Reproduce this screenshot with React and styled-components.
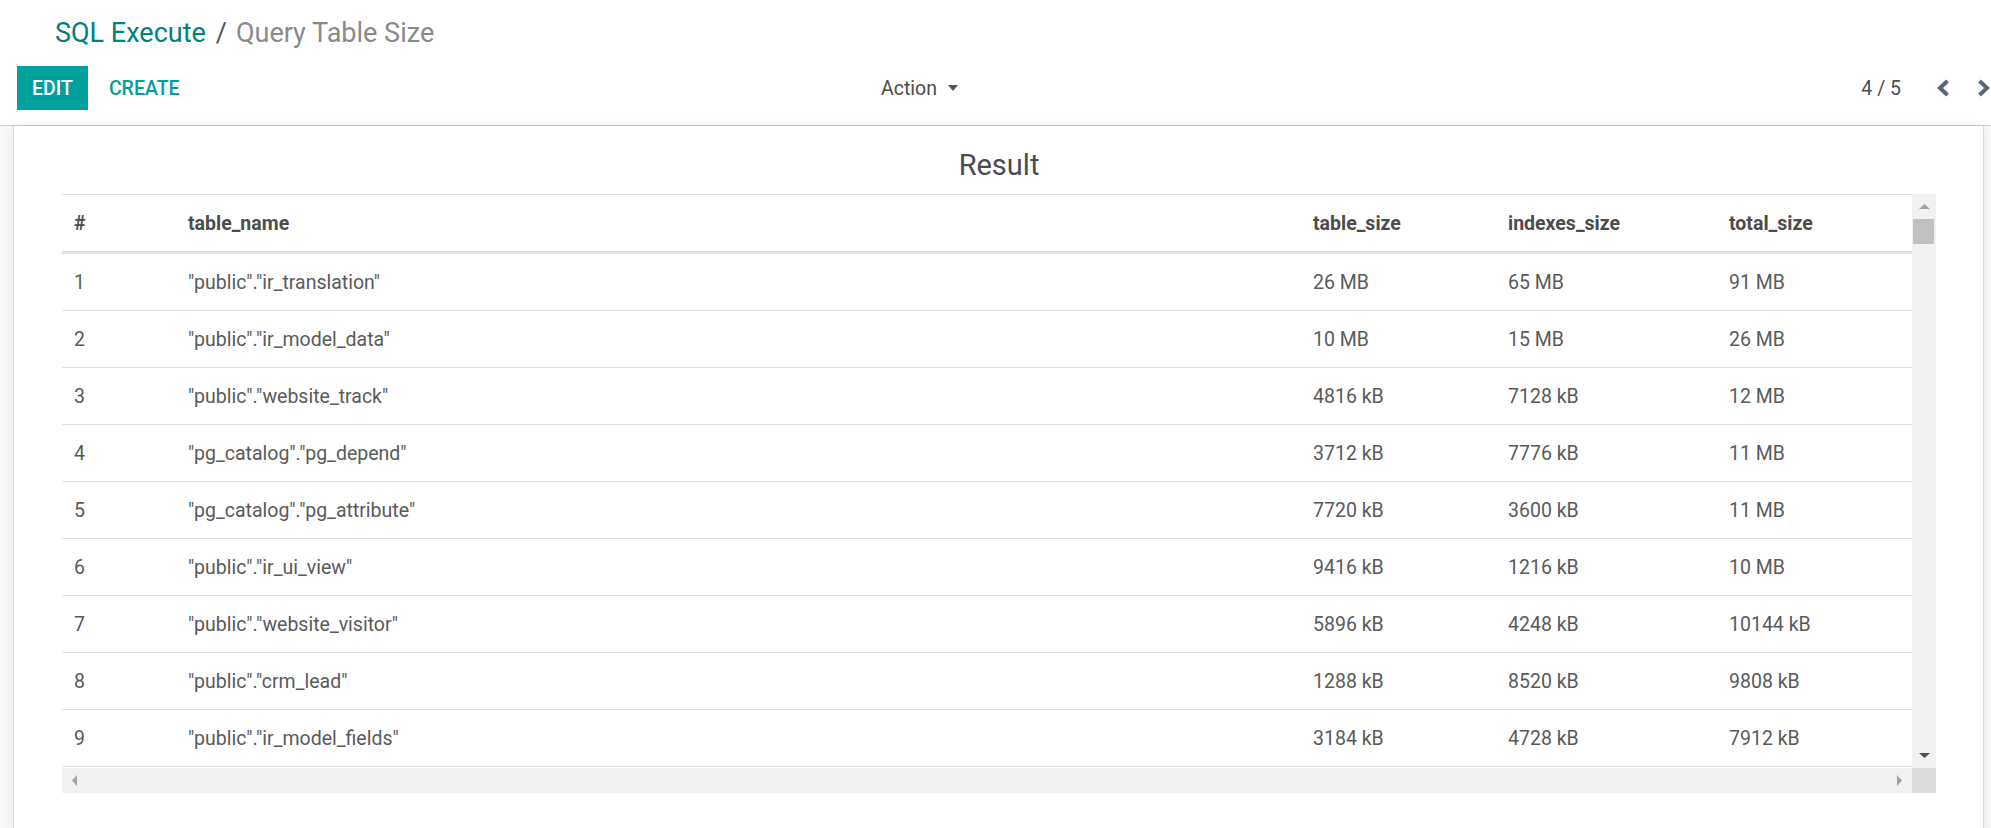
import React from 'react';
import styled, { createGlobalStyle } from 'styled-components';

const GlobalStyle = createGlobalStyle`
  html, body {
    margin: 0;
    padding: 0;
    background: #f9f9f9;
    font-family: Roboto, "Liberation Sans", Arial, sans-serif;
    color: #4c4c4c;
  }
  * {
    box-sizing: border-box;
  }
`;

const ControlPanel = styled.div`
  background: #fff;
  border-bottom: 1px solid #cfcfcf;
  padding: 15px 0 15px 17px;
`;

const Breadcrumb = styled.div`
  display: flex;
  align-items: center;
  padding-left: 38px;
  height: 36px;
  font-size: 27px;
  line-height: 36px;
  white-space: nowrap;
`;

const CrumbLink = styled.span`
  color: #01807c;
`;

const CrumbSep = styled.span`
  color: #555;
  margin: 0 9px 0 10px;
`;

const CrumbActive = styled.span`
  color: #8a8a8a;
`;

const BottomRow = styled.div`
  display: flex;
  align-items: center;
  margin-top: 15px;
  height: 44px;
`;

const LeftGroup = styled.div`
  flex: 0 0 calc(50% - 8px);
  display: flex;
  align-items: center;
`;

const Button = styled.button`
  height: 44px;
  padding: 0 15px;
  border: none;
  font-family: inherit;
  font-size: 19.5px;
  font-weight: 500;
  text-transform: uppercase;
  cursor: pointer;
  background: ${(p) => (p.primary ? '#00a09d' : 'transparent')};
  color: ${(p) => (p.primary ? '#fff' : '#00a09d')};
  margin-left: ${(p) => (p.primary ? '0' : '6px')};
`;

const ActionMenu = styled.div`
  margin-left: auto;
  margin-right: 38px;
  display: flex;
  align-items: center;
  font-size: 19.5px;
  color: #4c4c4c;
`;

const Caret = styled.span`
  display: inline-block;
  margin-left: 11px;
  border-top: 6px solid #555;
  border-left: 5px solid transparent;
  border-right: 5px solid transparent;
`;

const RightGroup = styled.div`
  flex: 1;
  display: flex;
  justify-content: flex-end;
  align-items: center;
`;

const PagerValue = styled.span`
  font-size: 19.5px;
  color: #4c4c4c;
  margin-right: 35px;
  white-space: nowrap;
`;

const PagerButton = styled.span`
  display: inline-flex;
  width: 15px;
  height: 18px;
  margin-left: ${(p) => p.gap || 0}px;
`;

const Main = styled.div`
  padding: 0 7px 0 13px;
`;

const Sheet = styled.div`
  background: #fff;
  border-left: 1px solid #dcdcdc;
  border-right: 1px solid #dcdcdc;
  box-shadow: 0 0 10px rgba(0, 0, 0, 0.08);
  min-height: calc(100vh - 126px);
  padding: 22px 47px 40px 48px;
`;

const Title = styled.div`
  text-align: center;
  font-size: 29px;
  line-height: 34px;
  color: #4c4c4c;
  margin-bottom: 12px;
`;

const ScrollFrame = styled.div`
  display: grid;
  grid-template-columns: 1fr 24px;
  grid-template-rows: 574px 25px;
`;

const Viewport = styled.div`
  overflow: hidden;
`;

const columns = '114px 1125px 195px 221px 195px';

const HeaderRow = styled.div`
  display: grid;
  grid-template-columns: ${columns};
  height: 60px;
  border-top: 1px solid #dee2e6;
  border-bottom: 3px solid #dee2e6;
`;

const Row = styled.div`
  display: grid;
  grid-template-columns: ${columns};
  height: 57px;
  border-bottom: 1px solid #dee2e6;
`;

const HeadCell = styled.div`
  display: flex;
  align-items: center;
  padding: 0 12px;
  font-size: 19.5px;
  font-weight: 700;
  color: #4c4c4c;
  white-space: nowrap;
`;

const Cell = styled.div`
  display: flex;
  align-items: center;
  padding: 0 12px;
  font-size: 19.5px;
  color: #5a5a5a;
  white-space: nowrap;
`;

const VScroll = styled.div`
  display: flex;
  flex-direction: column;
  background: #f1f1f1;
`;

const HScroll = styled.div`
  display: flex;
  background: #f1f1f1;
`;

const ArrowBox = styled.div`
  flex: 0 0 25px;
  height: 25px;
  width: ${(p) => (p.wide ? '25px' : '24px')};
  display: flex;
  align-items: center;
  justify-content: center;
`;

const Thumb = styled.div`
  height: 25px;
  margin: 0 2px 0 1px;
  background: #c1c1c1;
`;

const Spacer = styled.div`
  flex: 1;
`;

const Corner = styled.div`
  background: #dcdcdc;
`;

const rows = [
  ['1', '"public"."ir_translation"', '26 MB', '65 MB', '91 MB'],
  ['2', '"public"."ir_model_data"', '10 MB', '15 MB', '26 MB'],
  ['3', '"public"."website_track"', '4816 kB', '7128 kB', '12 MB'],
  ['4', '"pg_catalog"."pg_depend"', '3712 kB', '7776 kB', '11 MB'],
  ['5', '"pg_catalog"."pg_attribute"', '7720 kB', '3600 kB', '11 MB'],
  ['6', '"public"."ir_ui_view"', '9416 kB', '1216 kB', '10 MB'],
  ['7', '"public"."website_visitor"', '5896 kB', '4248 kB', '10144 kB'],
  ['8', '"public"."crm_lead"', '1288 kB', '8520 kB', '9808 kB'],
  ['9', '"public"."ir_model_fields"', '3184 kB', '4728 kB', '7912 kB'],
];

const Chevron = ({ dir }) => (
  <svg width="15" height="18" viewBox="0 0 15 18">
    <polyline
      points={dir === 'left' ? '11.5,2 4,9 11.5,16' : '3.5,2 11,9 3.5,16'}
      fill="none"
      stroke="#5a6675"
      strokeWidth="4"
    />
  </svg>
);

// little triangles on the scrollbar buttons
const Tri = ({ dir, color }) => {
  const pts = {
    up: '0,5 5.5,0 11,5',
    down: '0,0 11,0 5.5,5',
    left: '5,0 5,11 0,5.5',
    right: '0,0 0,11 5,5.5',
  }[dir];
  const vertical = dir === 'up' || dir === 'down';
  return (
    <svg width={vertical ? 11 : 5} height={vertical ? 5 : 11}>
      <polygon points={pts} fill={color} />
    </svg>
  );
};

export default function App() {
  return (
    <>
      <GlobalStyle />
      <ControlPanel>
        <Breadcrumb>
          <CrumbLink>SQL Execute</CrumbLink>
          <CrumbSep>/</CrumbSep>
          <CrumbActive>Query Table Size</CrumbActive>
        </Breadcrumb>
        <BottomRow>
          <LeftGroup>
            <Button primary>Edit</Button>
            <Button>Create</Button>
            <ActionMenu>
              Action
              <Caret />
            </ActionMenu>
          </LeftGroup>
          <RightGroup>
            <PagerValue>4 / 5</PagerValue>
            <PagerButton>
              <Chevron dir="left" />
            </PagerButton>
            <PagerButton gap={25}>
              <Chevron dir="right" />
            </PagerButton>
          </RightGroup>
        </BottomRow>
      </ControlPanel>
      <Main>
        <Sheet>
          <Title>Result</Title>
          <ScrollFrame>
            <Viewport>
              <HeaderRow>
                <HeadCell>#</HeadCell>
                <HeadCell>table_name</HeadCell>
                <HeadCell>table_size</HeadCell>
                <HeadCell>indexes_size</HeadCell>
                <HeadCell>total_size</HeadCell>
              </HeaderRow>
              {rows.map((r) => (
                <Row key={r[0]}>
                  {r.map((c, i) => (
                    <Cell key={i}>{c}</Cell>
                  ))}
                </Row>
              ))}
            </Viewport>
            <VScroll>
              <ArrowBox>
                <Tri dir="up" color="#a3a3a3" />
              </ArrowBox>
              <Thumb />
              <Spacer />
              <ArrowBox>
                <Tri dir="down" color="#505050" />
              </ArrowBox>
            </VScroll>
            <HScroll>
              <ArrowBox wide>
                <Tri dir="left" color="#a3a3a3" />
              </ArrowBox>
              <Spacer />
              <ArrowBox wide>
                <Tri dir="right" color="#a3a3a3" />
              </ArrowBox>
            </HScroll>
            <Corner />
          </ScrollFrame>
        </Sheet>
      </Main>
    </>
  );
}
